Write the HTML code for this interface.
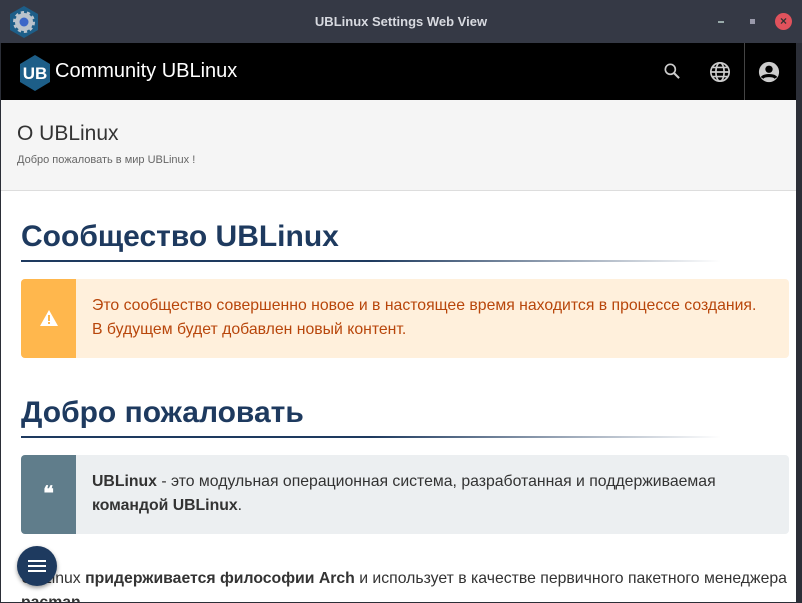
<!DOCTYPE html><html><head><meta charset="utf-8"><style>
*{margin:0;padding:0;box-sizing:border-box}
body{width:802px;height:603px;overflow:hidden;background:#2b2e37;font-family:"Liberation Sans",sans-serif;position:relative}
.tb{position:absolute;left:0;top:0;width:802px;height:43px;background:#353945;color:#d8dae0;font-weight:bold;font-size:13px;text-align:center;line-height:43px}
.win{position:absolute;left:1px;top:43px;width:800px;height:559px;background:#fff;overflow:hidden}
.hd{position:absolute;left:0;top:0;width:800px;height:57px;background:#000;color:#fff}
.ph{position:absolute;left:0;top:57px;width:795px;height:91px;background:#f5f5f5;border-bottom:1px solid #ddd}
h1{position:absolute;left:20px;font-size:30px;color:#1e3a5f;font-weight:bold}
.ul{position:absolute;left:20px;height:2px;width:700px;background:linear-gradient(90deg,#1e3a5f,#1e3a5f 50%,#fff)}
.box{position:absolute;left:20px;width:768px;border-radius:4px;font-size:15.8px;line-height:24px}
.ic{position:absolute;left:0;top:0;bottom:0;width:55px;border-radius:4px 0 0 4px;color:#fff;text-align:center}
p.t{padding:14px 8px 0 71px;white-space:nowrap}
</style></head><body>
<div class="tb">UBLinux Settings Web View</div>
<svg style="position:absolute;left:9px;top:6px" width="30" height="32" viewBox="0 0 30 32"><polygon points="15,0 29,8 29,24 15,32 1,24 1,8" fill="#1d5e88"/><circle cx="15" cy="16" r="9" fill="#b9c3cc" stroke="#b9c3cc" stroke-width="4" stroke-dasharray="3 2.6"/><circle cx="15" cy="16" r="4.5" fill="#3b67c8"/></svg>
<div style="position:absolute;left:718px;top:21px;width:6px;height:2px;background:#9aa"></div>
<div style="position:absolute;left:750px;top:19px;width:5px;height:5px;background:#99a"></div>
<div style="position:absolute;left:775px;top:13px;width:17px;height:17px;border-radius:50%;background:#e0525c;color:#333;font-size:12px;line-height:17px;text-align:center;font-weight:bold">×</div>
<div class="win">
<div class="hd">
<svg style="position:absolute;left:18px;top:12px" width="32" height="36" viewBox="0 0 32 36"><polygon points="16,0 31,9 31,27 16,36 1,27 1,9" fill="#1d5e88"/><text x="16" y="24" font-size="17" font-weight="bold" fill="#fff" text-anchor="middle" font-family="Liberation Sans">UB</text></svg>
<div style="position:absolute;left:54px;top:17px;font-size:20px">Community UBLinux</div>
<svg style="position:absolute;left:661px;top:18px" width="20" height="20" viewBox="0 0 24 24"><circle cx="10" cy="10" r="6" fill="none" stroke="#ccc" stroke-width="2"/><path d="M14.5 14.5l6 6" stroke="#ccc" stroke-width="2.5"/></svg>
<svg style="position:absolute;left:708px;top:18px" width="22" height="22" viewBox="0 0 24 24" fill="none" stroke="#ccc" stroke-width="1.8"><circle cx="12" cy="12" r="10"/><ellipse cx="12" cy="12" rx="4.5" ry="10"/><path d="M2 12h20M4 7h16M4 17h16"/></svg>
<div style="position:absolute;left:743px;top:0;width:1px;height:57px;background:#444"></div>
<svg style="position:absolute;left:757px;top:18px" width="22" height="22" viewBox="0 0 24 24"><circle cx="12" cy="12" r="11" fill="#ccc"/><circle cx="12" cy="9" r="4" fill="#000"/><path d="M4.5 18.5c2-3.5 13-3.5 15 0" stroke="#000" stroke-width="3.5" fill="none"/></svg>
</div>
<div style="position:absolute;right:0;top:0;width:5px;height:559px;background:#2b2e37"></div>
<div class="ph"><div style="position:absolute;left:16px;top:22px;font-size:21px;color:#333">О UBLinux</div><div style="position:absolute;left:16px;top:54px;font-size:11px;color:#666">Добро пожаловать в мир UBLinux !</div></div>
<h1 style="top:177px">Сообщество UBLinux</h1><div class="ul" style="top:217px"></div>
<div class="box" style="top:236px;height:79px;background:#fff0dc;color:#b8460b"><div class="ic" style="background:#ffb74d"><svg style="margin-top:31px" width="18" height="16" viewBox="0 0 18 16"><path d="M9 0L18 16H0z" fill="#fff"/><rect x="8" y="5" width="2" height="6" fill="#ffb74d"/><rect x="8" y="12" width="2" height="2" fill="#ffb74d"/></svg></div><p class="t" style="padding-top:15px">Это сообщество совершенно новое и в настоящее время находится в процессе создания.<br>В будущем будет добавлен новый контент.</p></div>
<h1 style="top:353px">Добро пожаловать</h1><div class="ul" style="top:393px"></div>
<div class="box" style="top:412px;height:79px;background:#eceff1;color:#333"><div class="ic" style="background:#607d8b;font-size:20px;font-weight:bold;line-height:79px">❝</div><p class="t" style="padding-top:15px"><b>UBLinux</b> - это модульная операционная система, разработанная и поддерживаемая<br><b>командой UBLinux</b>.</p></div>
<div style="position:absolute;left:20px;top:524px;font-size:15.8px;color:#333;line-height:24px;white-space:nowrap">UBLinux <b>придерживается философии Arch</b> и использует в качестве первичного пакетного менеджера<br><b>pacman</b></div>
<div style="position:absolute;left:16px;top:503px;width:40px;height:40px;border-radius:50%;background:#1e3a5f;box-shadow:0 2px 4px rgba(0,0,0,.4)"><div style="position:absolute;left:11px;top:14px;width:18px;height:2px;background:#fff;box-shadow:0 5px #fff,0 10px #fff"></div></div>
</div>
</body></html>
